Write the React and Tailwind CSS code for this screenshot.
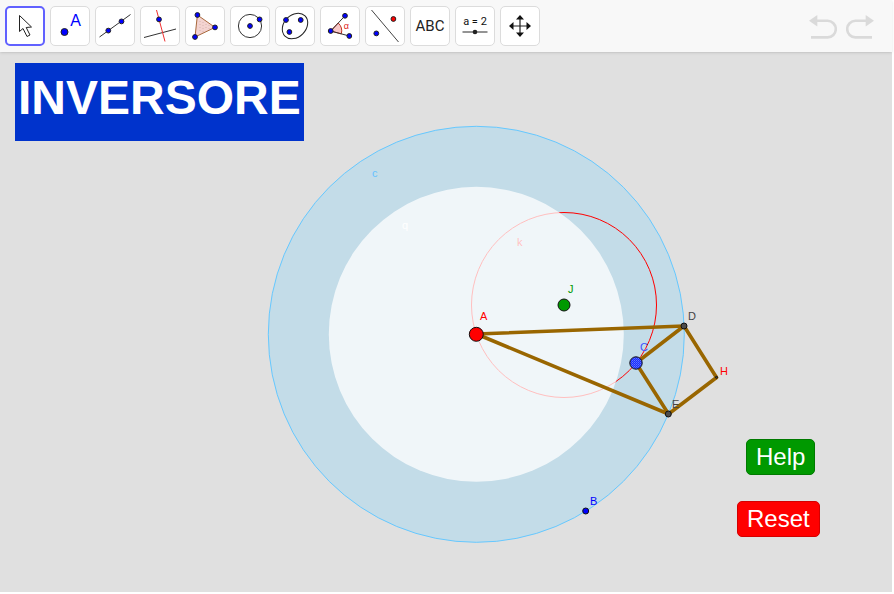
const BLUE = "#0000ff";

const Dot = ({ x, y, r = 2.4, fill = BLUE }) => (
  <circle cx={x} cy={y} r={r} fill={fill} stroke="#222" strokeWidth="1" />
);

const tools = [
  {
    name: "Move",
    icon: (
      <path
        d="M12.5 7.5V23.5L16 20.5L20 28.5L23 27L19.2 19.5L24.5 19Z"
        fill="#fff"
        stroke="#222"
        strokeWidth="1"
      />
    ),
  },
  {
    name: "Point",
    icon: (
      <>
        <Dot x={12.5} y={24} r={3.5} />
        <text x="23.5" y="18" fontSize="16" textAnchor="middle" fill={BLUE}>
          A
        </text>
      </>
    ),
  },
  {
    name: "Line",
    icon: (
      <>
        <path d="M2.5 29L33.5 6.5" stroke="#333" />
        <Dot x={11.3} y={22.6} />
        <Dot x={24.5} y={13.4} />
      </>
    ),
  },
  {
    name: "Perpendicular Line",
    icon: (
      <>
        <path d="M2 29.5L34 21" stroke="#333" />
        <path d="M14.5 2L23 33.5" stroke="#f03030" />
        <Dot x={17} y={11.4} />
      </>
    ),
  },
  {
    name: "Polygon",
    icon: (
      <>
        <path d="M10.4 7L28 19.4L8 29Z" fill="#f3d3d0" stroke="#a8683c" />
        <path
          d="M13 13V25M16 14V24M19 16V22M22 17V21"
          stroke="#d6b3b0"
          strokeDasharray="1 2"
        />
        <Dot x={10.4} y={7} />
        <Dot x={28} y={19.4} />
        <Dot x={8} y={29} />
      </>
    ),
  },
  {
    name: "Circle with Center",
    icon: (
      <>
        <circle cx="18" cy="18" r="11.6" fill="none" stroke="#333" />
        <Dot x={18} y={18} />
        <Dot x={27.6} y={11.4} />
      </>
    ),
  },
  {
    name: "Ellipse",
    icon: (
      <>
        <ellipse
          cx="18"
          cy="18"
          rx="14.2"
          ry="11"
          transform="rotate(-45 18 18)"
          fill="none"
          stroke="#222"
        />
        <Dot x={9} y={12} />
        <Dot x={23.7} y={12} />
        <Dot x={12.4} y={24} />
      </>
    ),
  },
  {
    name: "Angle",
    icon: (
      <>
        <path
          d="M8.7 23L16.2 15A11 11 0 0 1 19.3 25.9Z"
          fill="#f9c8c8"
          stroke="#c03020"
        />
        <path d="M23 7.8L8.7 23L27.3 28" fill="none" stroke="#333" />
        <text x="24.4" y="21" fontSize="9" textAnchor="middle" fill="#e02020">
          α
        </text>
        <Dot x={23} y={7.8} />
        <Dot x={8.7} y={23} />
        <Dot x={27.3} y={28} />
      </>
    ),
  },
  {
    name: "Reflect about Line",
    icon: (
      <>
        <path d="M4.5 2L31.5 34" stroke="#444" />
        <Dot x={26.4} y={11} fill="#f00" />
        <Dot x={9.3} y={25.4} />
      </>
    ),
  },
  {
    name: "Text",
    icon: (
      <text
        x="18"
        y="23"
        fontSize="15"
        textAnchor="middle"
        fill="#222"
        className="font-['Roboto',sans-serif]"
      >
        ABC
      </text>
    ),
  },
  {
    name: "Slider",
    icon: (
      <>
        <text
          x="18"
          y="17"
          fontSize="11"
          textAnchor="middle"
          fill="#111"
          className="font-['Roboto',sans-serif]"
        >
          a = 2
        </text>
        <path d="M5.5 24H30.5" stroke="#666" strokeWidth="1.4" />
        <circle cx="18" cy="24" r="2.3" fill="#222" />
      </>
    ),
  },
  {
    name: "Move Graphics View",
    icon: (
      <>
        <path d="M18 10V26M10 18H26" stroke="#222" strokeWidth="1.2" />
        <path
          d="M18 7L22 11.5H14ZM18 29L22 24.5H14ZM7 18L11.5 14V22ZM29 18L24.5 14V22Z"
          fill="#111"
        />
      </>
    ),
  },
];

const rods = [
  [476.5, 282, 684, 274],
  [476.5, 282, 668.5, 362],
  [684, 274, 636, 311],
  [636, 311, 668.5, 362],
  [684, 274, 716.5, 325.5],
  [668.5, 362, 716.5, 325.5],
];

const points = [
  { name: "A", x: 476.3, y: 282.3, r: 7, fill: "#ff0000", color: "#ff0000", lx: 480, ly: 268 },
  { name: "J", x: 564, y: 253, r: 6, fill: "#009900", color: "#009900", lx: 568, ly: 241 },
  { name: "C", x: 636, y: 311, r: 6.2, fill: "url(#hatch)", color: "#3c50ff", lx: 640, ly: 299 },
  { name: "D", x: 684, y: 274, r: 3, fill: "#4d4d4d", color: "#444444", lx: 688, ly: 268 },
  { name: "E", x: 668.3, y: 362, r: 3, fill: "#4d4d4d", color: "#444444", lx: 672, ly: 356 },
  { name: "H", x: 716.5, y: 325.3, r: 1, fill: "#4d4d4d", color: "#ff0000", lx: 720, ly: 323 },
  { name: "B", x: 585.7, y: 459, r: 3, fill: "#0000ff", color: "#0000ff", lx: 590, ly: 453 },
];

const Toolbar = () => {
  return (
    <header className="relative z-10 flex items-center justify-between bg-[#f8f8f8] py-[6px] pl-[5px] pr-[18px] shadow-sm">
      <div className="flex gap-[5px]">
        {tools.map((tool, i) => (
          <button
            key={tool.name}
            type="button"
            aria-label={tool.name}
            className={
              i === 0
                ? "flex size-10 items-center justify-center rounded-[5px] border-2 border-[#6161ff] bg-white"
                : "flex size-10 items-center justify-center rounded-[5px] border border-[#dcdcdc] bg-white"
            }
          >
            <svg viewBox="0 0 36 36" className="size-9 shrink-0">
              {tool.icon}
            </svg>
          </button>
        ))}
      </div>
      <div className="flex gap-[9px]">
        <button type="button" aria-label="Undo">
          <svg viewBox="0 0 28 26" className="h-[26px] w-7">
            <path d="M0 7.8L8.3 2V13.6Z" fill="#dadada" />
            <path
              d="M7 7.8H18.5A8.2 8.2 0 0 1 18.5 24.4H2"
              fill="none"
              stroke="#dadada"
              strokeWidth="2.6"
            />
          </svg>
        </button>
        <button type="button" aria-label="Redo">
          <svg viewBox="0 0 28 26" className="h-[26px] w-7">
            <path d="M28 7.8L19.7 2V13.6Z" fill="#dadada" />
            <path
              d="M21 7.8H9.5A8.2 8.2 0 0 0 9.5 24.4H26"
              fill="none"
              stroke="#dadada"
              strokeWidth="2.6"
            />
          </svg>
        </button>
      </div>
    </header>
  );
};

const Construction = () => {
  return (
    <svg className="absolute inset-0 h-full w-full" fontSize="11">
      <defs>
        <pattern id="hatch" width="2" height="2" patternUnits="userSpaceOnUse">
          <rect width="2" height="2" fill="#1a2cff" />
          <rect width="1" height="1" fill="#6478ff" />
          <rect x="1" y="1" width="1" height="1" fill="#4a5cff" />
        </pattern>
      </defs>
      <circle cx="476.3" cy="282.3" r="208" fill="#c3dce8" stroke="#66c8ff" />
      <text x="372" y="125" fill="#66c2ff">c</text>
      <circle cx="564" cy="253" r="92.5" fill="none" stroke="#ff0000" />
      <text x="517" y="194" fill="#ff0000">k</text>
      {/* translucent disc washes out whatever lies inside it */}
      <circle cx="476.3" cy="282.3" r="147.5" fill="#ffffff" fillOpacity="0.75" />
      <text x="402" y="177" fill="#ffffff">q</text>
      {rods.map(([x1, y1, x2, y2], i) => (
        <line key={i} x1={x1} y1={y1} x2={x2} y2={y2} stroke="#996600" strokeWidth="3.6" strokeLinecap="round" />
      ))}
      {points.map((p) => (
        <g key={p.name}>
          <circle cx={p.x} cy={p.y} r={p.r} fill={p.fill} stroke="#111" strokeWidth="1" />
          <text x={p.lx} y={p.ly} fill={p.color}>{p.name}</text>
        </g>
      ))}
    </svg>
  );
};

const App = () => {
  return (
    <div className="flex min-h-screen flex-col bg-white pb-0.5 pr-0.5 font-['Liberation_Sans',Arial,sans-serif]">
      <Toolbar />
      <main className="relative flex-1 overflow-hidden bg-[#e0e0e0] pl-[15px] pt-[11px]">
        <Construction />
        <h1 className="relative w-fit bg-[#0033cc] px-[3px] pb-[9px] text-5xl leading-[69px] font-bold text-white">
          INVERSORE
        </h1>
        <button
          type="button"
          className="absolute left-[746px] top-[387px] h-9 rounded-[5px] border border-[#007a00] bg-[#009900] px-[9px] text-2xl leading-none text-white"
        >
          Help
        </button>
        <button
          type="button"
          className="absolute left-[737px] top-[449px] h-9 rounded-[5px] border border-[#d40000] bg-[#ff0000] px-[9px] text-2xl leading-none text-white"
        >
          Reset
        </button>
      </main>
    </div>
  );
};

export default App;
